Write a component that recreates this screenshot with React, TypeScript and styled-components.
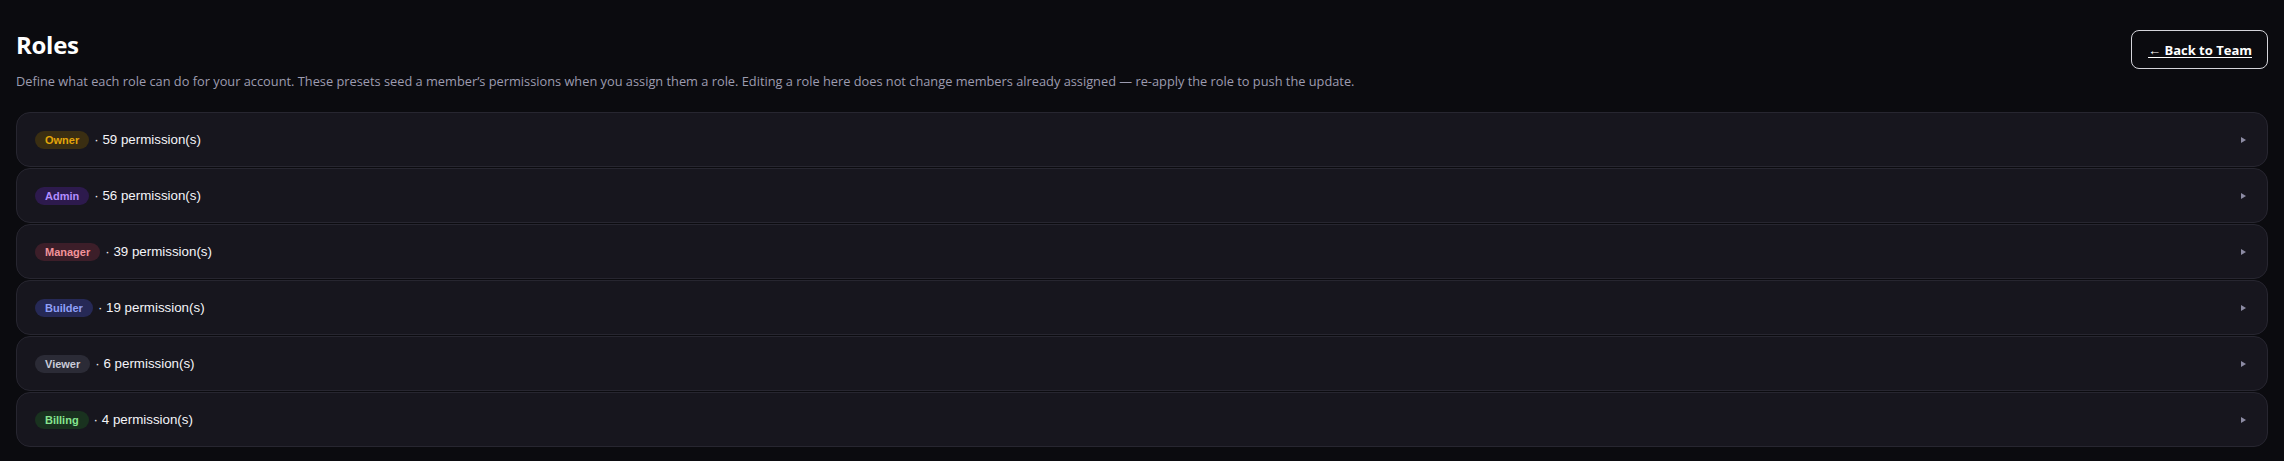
import React from "react";
import styled, { createGlobalStyle } from "styled-components";

const GlobalStyle = createGlobalStyle`
  html, body {
    margin: 0;
    padding: 0;
    background: #0b0b0f;
  }
  * { box-sizing: border-box; }
`;

const Page = styled.div`
  padding: 30px 16px 16px;
  font-family: "Open Sans", "Noto Sans", sans-serif;
  color: #ffffff;
`;

const Header = styled.header`
  display: flex;
  justify-content: space-between;
  align-items: flex-start;
`;

const TitleBlock = styled.div`
  display: flex;
  flex-direction: column;
`;

const Title = styled.h1`
  margin: 0;
  font-size: 24px;
  line-height: 29px;
  font-weight: 700;
  letter-spacing: -0.3px;
  color: #ffffff;
`;

const Subtitle = styled.p`
  margin: 12px 0 0;
  font-size: 12.8px;
  line-height: 21px;
  color: #9d9cb0;
`;

const BackLink = styled.a`
  display: inline-flex;
  align-items: center;
  height: 39px;
  padding: 0 15px 0 16px;
  border: 1px solid #d4d4da;
  border-radius: 8px;
  color: #ffffff;
  font-size: 13px;
  font-weight: 700;
  text-decoration: underline;
  text-underline-offset: 2px;
  cursor: pointer;
`;

const RoleList = styled.div`
  display: flex;
  flex-direction: column;
  gap: 1px;
  margin-top: 20px;
`;

const RoleRow = styled.button`
  display: flex;
  align-items: center;
  width: 100%;
  height: 55px;
  padding: 0 21px 0 18px;
  background: #17161e;
  border: 1px solid #272630;
  border-radius: 14px;
  font-family: "Liberation Sans", Arial, sans-serif;
  font-size: 13.333px;
  font-weight: 500;
  color: #f4f4f8;
  text-align: left;
  cursor: pointer;
`;

type Tone = { bg: string; fg: string };

const Badge = styled.span<{ $tone: Tone }>`
  display: inline-flex;
  align-items: center;
  height: 18px;
  padding: 0 10px;
  border-radius: 999px;
  background: ${(p) => p.$tone.bg};
  color: ${(p) => p.$tone.fg};
  font-size: 11px;
  font-weight: 700;
`;

const Count = styled.span`
  margin-left: 5px;
  flex: 1;
`;

const Marker = styled.svg`
  width: 5px;
  height: 6px;
  flex: none;
`;

const roles: { name: string; count: number; tone: Tone }[] = [
  { name: "Owner", count: 59, tone: { bg: "#3a2e12", fg: "#e3a50a" } },
  { name: "Admin", count: 56, tone: { bg: "#2d1a4d", fg: "#b28cff" } },
  { name: "Manager", count: 39, tone: { bg: "#3c1e29", fg: "#f3939a" } },
  { name: "Builder", count: 19, tone: { bg: "#262956", fg: "#8f9ff7" } },
  { name: "Viewer", count: 6, tone: { bg: "#2b2b36", fg: "#c9ccd8" } },
  { name: "Billing", count: 4, tone: { bg: "#19321f", fg: "#86e58f" } },
];

export default function App() {
  return (
    <>
      <GlobalStyle />
      <Page>
        <Header>
          <TitleBlock>
            <Title>Roles</Title>
            <Subtitle>
              Define what each role can do for your account. These presets seed a member’s permissions when you assign them a role. Editing a role here does not change members already assigned — re-apply the role to push the update.
            </Subtitle>
          </TitleBlock>
          <BackLink>← Back to Team</BackLink>
        </Header>
        <RoleList>
          {roles.map((r) => (
            <RoleRow key={r.name}>
              <Badge $tone={r.tone}>{r.name}</Badge>
              <Count>· {r.count} permission(s)</Count>
              <Marker viewBox="0 0 5 6">
                <path d="M0 0 L5 3 L0 6 Z" fill="#8c8ba3" />
              </Marker>
            </RoleRow>
          ))}
        </RoleList>
      </Page>
    </>
  );
}
